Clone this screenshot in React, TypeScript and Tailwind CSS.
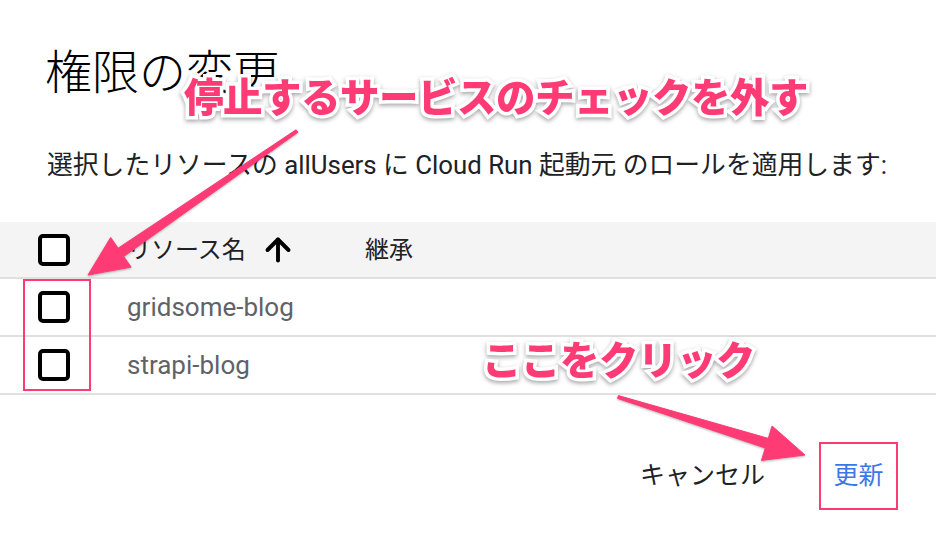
import { ArrowUp } from 'lucide-react';

const FONT = "font-['Roboto','Noto_Sans_CJK_JP',sans-serif]";

const rows = ['gridsome-blog', 'strapi-blog'];

function Checkbox() {
  return <div className="h-8 w-8 rounded-[5px] border-[4px] border-black bg-white" />;
}

export default function App() {
  return (
    <div className={`relative h-[544px] w-[936px] overflow-hidden bg-white ${FONT}`}>
      <div className="flex flex-col">
        <h1 className="mt-[41px] pl-[45px] text-[47px] font-light leading-[64px] text-black">権限の変更</h1>

        <p className="mt-[43px] pl-[47px] text-[25.8px] leading-[34px] text-[#202124]">
          選択したリソースの allUsers に Cloud Run 起動元 のロールを適用します:
        </p>

        <div className="mt-[40px] flex flex-col">
          <div className="flex h-[57px] items-center border-b-2 border-[#e0e0e0] bg-[#f4f4f4]">
            <div className="ml-[38px] w-[89px]">
              <Checkbox />
            </div>
            <div className="flex w-[238px] items-center">
              <span className="text-[24px] text-[#202124]">リソース名</span>
              <ArrowUp className="ml-[14px] h-9 w-9 text-black" strokeWidth={2.6} />
            </div>
            <span className="text-[24px] text-[#202124]">継承</span>
          </div>
          {rows.map((name) => (
            <div key={name} className="flex h-[58px] items-center border-b-2 border-[#e0e0e0]">
              <div className="ml-[38px] w-[89px]">
                <Checkbox />
              </div>
              <span className="text-[26px] text-[#5f6368]">{name}</span>
            </div>
          ))}
        </div>

        <div className="mt-[47px] flex items-center justify-end pr-[38px]">
          <button type="button" className="text-[25px] text-[#202124]">
            キャンセル
          </button>
          <button
            type="button"
            className="ml-[54px] flex h-[68px] w-[79px] items-center justify-center border-2 border-[#ff3b76] text-[25px] text-[#3b78e7]"
          >
            更新
          </button>
        </div>
      </div>

      {/* annotations */}
      <div className="absolute left-[23px] top-[279px] h-[112px] w-[68px] border-2 border-[#ff3b76]" />

      <svg
        className="pointer-events-none absolute left-0 top-0 drop-shadow-[0_1px_1px_rgba(0,0,0,0.3)]"
        width="936"
        height="544"
        viewBox="0 0 936 544"
      >
        <polygon
          points="297.9,132.2 123.7,256.4 131.1,267.1 88,275 110.7,237.5 118.1,248.2 296.1,129.8"
          fill="#ff3b76"
          stroke="#ff3b76"
          strokeWidth="1"
          strokeLinejoin="round"
        />
        <polygon
          points="617.6,398.4 765.3,448 761.5,460.4 805,455 772.1,426 768.3,438.4 618.4,395.6"
          fill="#ff3b76"
          stroke="#ff3b76"
          strokeWidth="1"
          strokeLinejoin="round"
        />
      </svg>

      <div className="absolute left-[184px] top-[71px] text-[39.5px] font-black leading-[56px] tracking-[-0.5px] text-[#ff3b76] drop-shadow-[0_2px_2px_rgba(0,0,0,0.35)] [-webkit-text-stroke:7px_#fff] [paint-order:stroke_fill]">
        停止するサービスのチェックを外す
      </div>
      <div className="absolute left-[482px] top-[334px] text-[39.5px] font-black leading-[56px] tracking-[-0.5px] text-[#ff3b76] drop-shadow-[0_2px_2px_rgba(0,0,0,0.35)] [-webkit-text-stroke:7px_#fff] [paint-order:stroke_fill]">
        ここをクリック
      </div>
    </div>
  );
}
